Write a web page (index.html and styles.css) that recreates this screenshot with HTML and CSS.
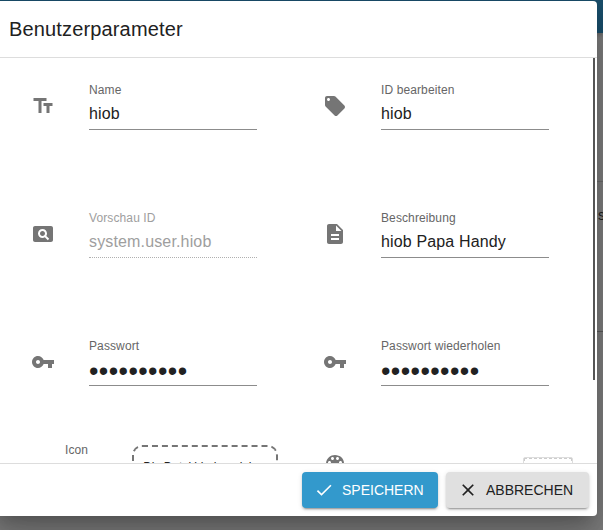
FILE: index.html
```html
<!DOCTYPE html>
<html lang="de">
<head>
<meta charset="utf-8">
<title>Benutzerparameter</title>
<link rel="stylesheet" href="styles.css">
</head>
<body>
<div class="page">
  <div class="appbar"></div>
  <div class="panel panel-top"></div>
  <div class="panel panel-card">s</div>
  <div class="panel"></div>
</div>
<div class="dialog" role="dialog" aria-labelledby="title">
  <h2 class="title" id="title">Benutzerparameter</h2>
  <div class="content">
    <div class="grid">
      <div class="field">
        <svg class="icon" viewBox="0 0 24 24"><path d="M2.5 4v3h5v12h3V7h5V4h-13zm19 5h-9v3h3v7h3v-7h3V9z"/></svg>
        <label class="control"><span class="label">Name</span><input class="input" type="text" value="hiob"></label>
      </div>
      <div class="field">
        <svg class="icon" viewBox="0 0 24 24"><path d="M21.41 11.58l-9-9C12.05 2.22 11.55 2 11 2H4c-1.1 0-2 .9-2 2v7c0 .55.22 1.05.59 1.42l9 9c.36.36.86.58 1.41.58.55 0 1.05-.22 1.41-.59l7-7c.37-.36.59-.86.59-1.41 0-.55-.23-1.06-.59-1.42zM5.5 7C4.67 7 4 6.33 4 5.5S4.67 4 5.5 4 7 4.67 7 5.5 6.33 7 5.5 7z"/></svg>
        <label class="control"><span class="label">ID bearbeiten</span><input class="input" type="text" value="hiob"></label>
      </div>
      <div class="field">
        <svg class="icon" viewBox="0 0 24 24"><path d="M11.5 9C10.12 9 9 10.12 9 11.5s1.12 2.5 2.5 2.5 2.5-1.12 2.5-2.5S12.88 9 11.5 9zM20 4H4c-1.1 0-2 .9-2 2v12c0 1.1.9 2 2 2h16c1.1 0 2-.9 2-2V6c0-1.1-.9-2-2-2zm-3.21 14.21l-2.91-2.91c-.69.44-1.51.7-2.39.7C9.01 16 7 13.99 7 11.5S9.01 7 11.5 7 16 9.01 16 11.5c0 .88-.26 1.69-.7 2.39l2.91 2.9-1.42 1.42z"/></svg>
        <label class="control disabled"><span class="label">Vorschau ID</span><input class="input" type="text" value="system.user.hiob" disabled></label>
      </div>
      <div class="field">
        <svg class="icon" viewBox="0 0 24 24"><path d="M14 2H6c-1.1 0-1.99.9-1.99 2L4 20c0 1.1.89 2 1.99 2H18c1.1 0 2-.9 2-2V8l-6-6zm2 16H8v-2h8v2zm0-4H8v-2h8v2zm-3-5V3.5L18.5 9H13z"/></svg>
        <label class="control"><span class="label">Beschreibung</span><input class="input" type="text" value="hiob Papa Handy"></label>
      </div>
      <div class="field">
        <svg class="icon" viewBox="0 0 24 24"><path d="M12.65 10C11.83 7.67 9.61 6 7 6c-3.31 0-6 2.69-6 6s2.69 6 6 6c2.61 0 4.83-1.67 5.65-4H17v4h4v-4h2v-4H12.65zM7 14c-1.1 0-2-.9-2-2s.9-2 2-2 2 .9 2 2-.9 2-2 2z"/></svg>
        <label class="control"><span class="label">Passwort</span><input class="input password" type="password" value="0123456789"></label>
      </div>
      <div class="field">
        <svg class="icon" viewBox="0 0 24 24"><path d="M12.65 10C11.83 7.67 9.61 6 7 6c-3.31 0-6 2.69-6 6s2.69 6 6 6c2.61 0 4.83-1.67 5.65-4H17v4h4v-4h2v-4H12.65zM7 14c-1.1 0-2-.9-2-2s.9-2 2-2 2 .9 2 2-.9 2-2 2z"/></svg>
        <label class="control"><span class="label">Passwort wiederholen</span><input class="input password" type="password" value="0123456789"></label>
      </div>
      <div class="upload">
        <span class="label">Icon</span>
        <div class="dropzone">Die Datei hierher ziehen</div>
      </div>
      <div class="color">
        <svg class="icon" viewBox="0 0 24 24"><path d="M12 3c-4.97 0-9 4.03-9 9s4.03 9 9 9c.83 0 1.5-.67 1.5-1.5 0-.39-.15-.74-.39-1.01-.23-.26-.38-.61-.38-.99 0-.83.67-1.5 1.5-1.5H16c2.76 0 5-2.24 5-5 0-4.42-4.03-8-9-8zm-5.5 9c-.83 0-1.5-.67-1.5-1.5S5.67 9 6.5 9 8 9.67 8 10.5 7.33 12 6.5 12zm3-4C8.67 8 8 7.33 8 6.5S8.67 5 9.5 5s1.5.67 1.5 1.5S10.33 8 9.5 8zm5 0c-.83 0-1.5-.67-1.5-1.5S13.67 5 14.5 5s1.5.67 1.5 1.5S15.33 8 14.5 8zm3 4c-.83 0-1.5-.67-1.5-1.5S16.67 9 17.5 9s1.5.67 1.5 1.5-.67 1.5-1.5 1.5z"/></svg>
        <div class="swatch"></div>
      </div>
    </div>
    <div class="scrollbar"></div>
  </div>
  <div class="actions">
    <button class="button primary"><svg class="button-icon" viewBox="0 0 24 24"><path d="M9 16.17L4.83 12l-1.42 1.41L9 19 21 7l-1.41-1.41z"/></svg>Speichern</button>
    <button class="button"><svg class="button-icon" viewBox="0 0 24 24"><path d="M19 6.41L17.59 5 12 10.59 6.41 5 5 6.41 10.59 12 5 17.59 6.41 19 12 13.41 17.59 19 19 17.59 13.41 12z"/></svg>Abbrechen</button>
  </div>
</div>
</body>
</html>
```
FILE: styles.css
```css
* { box-sizing: border-box; }
body {
  margin: 0;
  width: 603px;
  height: 530px;
  overflow: hidden;
  position: relative;
  background: #7f7f7f;
  font-family: "Liberation Sans", Arial, sans-serif;
  color: #212121;
}
.page { height: 530px; display: flex; flex-direction: column; }
.appbar { height: 33px; background: #1a4f6c; box-shadow: 0 2px 4px rgba(0,0,0,.2); z-index: 1; }
.panel { flex: 1; text-align: right; }
.panel-top { flex: 0 0 149px; border-bottom: 1px solid #6c6c6c; }
.panel-card { flex: 0 0 150px; margin-right: -2px; padding-top: 25px; border-bottom: 1px solid #5a5a5a; font-size: 14px; line-height: 16px; }

/* The dialog lies over the page and runs past its left edge. */
.dialog {
  position: absolute;
  z-index: 2;
  left: -7px;
  top: 1px;
  width: 604px;
  height: 515px;
  display: flex;
  flex-direction: column;
  background: #fff;
  border-radius: 4px;
  box-shadow: 0 11px 15px -7px rgba(0,0,0,.2), 0 24px 38px 3px rgba(0,0,0,.14), 0 9px 46px 8px rgba(0,0,0,.12);
}
.title {
  flex: 0 0 56px;
  margin: 0;
  padding-left: 16px;
  font-size: 20px;
  font-weight: 400;
  line-height: 56px;
  letter-spacing: .15px;
}
.content {
  flex: 0 0 407px;
  display: flex;
  justify-content: space-between;
  overflow: hidden;
  border-top: 1px solid #ddd;
  border-bottom: 1px solid #ddd;
}
.grid {
  display: grid;
  grid-template-columns: 292px 292px;
  grid-auto-rows: 128px;
  padding-top: 24px;
}
.field { display: flex; align-items: flex-start; gap: 34px; padding-left: 38px; }
.icon { width: 24px; height: 24px; margin-top: 12px; fill: #757575; flex: none; }
.control { display: flex; flex-direction: column; width: 168px; }
.label { font-size: 12px; line-height: 16px; letter-spacing: .11px; color: #666; }
.input {
  width: 168px;
  height: 32px;
  padding: 1px 0 0;
  border: 0;
  border-bottom: 1px solid #8c8c8c;
  background: none;
  font: 16px "Liberation Sans", Arial, sans-serif;
  letter-spacing: .15px;
  color: #212121;
}
.password { padding-top: 4px; font-size: 27px; line-height: 27px; letter-spacing: .4px; }
.disabled .label, .disabled .input { color: #9e9e9e; }
.disabled .input { border-bottom: 1px dotted #b0b0b0; }
.upload { display: flex; padding-left: 72px; }
.upload > .label { margin-top: -24px; }
.dropzone {
  width: 146px;
  height: 100px;
  margin: -21px 0 0 44px;
  padding: 13px 0 0 9px;
  border: 2px dashed #757575;
  border-radius: 10px;
  font-size: 12px;
  letter-spacing: -.15px;
  white-space: nowrap;
}
.color { display: flex; align-items: flex-start; padding-left: 38px; }
.color .icon { margin-top: -14px; }
.swatch {
  width: 50px;
  height: 30px;
  margin: -9px 0 0 176px;
  border: 1px solid #ddd;
  border-radius: 2px;
  outline: 1px dashed #ccc;
  outline-offset: -2px;
}
.scrollbar { width: 2px; height: 322px; margin-right: 2px; background: #555; }
.actions { flex: 1; display: flex; justify-content: flex-end; gap: 8px; padding: 8px 8px 0 0; }
.button {
  display: flex;
  align-items: center;
  gap: 8px;
  height: 36px;
  width: 143px;
  padding: 0 0 0 12px;
  border: 0;
  border-radius: 4px;
  background: #e0e0e0;
  box-shadow: 0 3px 1px -2px rgba(0,0,0,.2), 0 2px 2px rgba(0,0,0,.14), 0 1px 5px rgba(0,0,0,.12);
  font: 14px "Liberation Sans", Arial, sans-serif;
  letter-spacing: 0;
  text-transform: uppercase;
  color: #212121;
}
.primary { width: 136px; background: #3399cc; color: #fff; }
.button-icon { width: 20px; height: 20px; fill: currentColor; }
```
